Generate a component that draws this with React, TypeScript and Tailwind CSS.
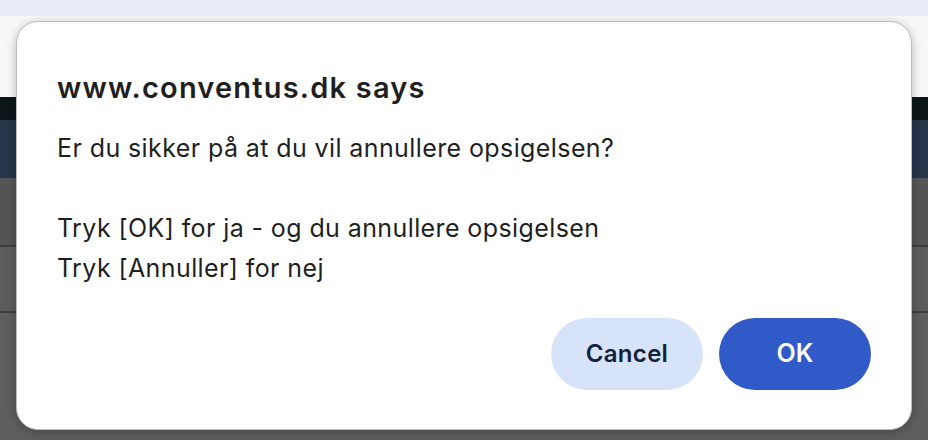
import React from "react";

export default function App() {
  return (
    <div
      className="relative w-[928px] h-[440px] overflow-hidden"
      style={{ fontFamily: "Inter, 'Noto Sans', sans-serif" }}
    >
      {/* page behind the dialog */}
      <div className="flex flex-col h-full">
        <div className="h-[16px] bg-[#e8edf7]" />
        <div className="h-[81px] bg-[#f7f7f7]" />
        <div className="h-[23px] bg-[#0e1718]" />
        <div className="h-[58px] bg-[#27354a]" />
        <div className="h-[69px] bg-[#555555] border-b-2 border-[#3e3e3e]" />
        <div className="h-[66px] bg-[#5c5c5c] border-b-2 border-[#3e3e3e]" />
        <div className="flex-1 bg-[#5e5e5e]" />
      </div>

      {/* alert dialog */}
      <div className="absolute left-[16px] top-[21px] w-[896px] h-[409px] bg-white rounded-[22px] border border-[#bdbdbd] shadow-[0_2px_10px_rgba(0,0,0,0.25)] flex flex-col px-[40px] pt-[46px] pb-[39px]">
        <h1 className="text-[29px] font-semibold leading-[40px] text-[#1f1f1f] tracking-[1.2px]">
          www.conventus.dk says
        </h1>
        <div className="mt-[20px] text-[25px] leading-[40px] text-[#1f1f1f] tracking-[0.4px]">
          <p>Er du sikker på at du vil annullere opsigelsen?</p>
          <p>&nbsp;</p>
          <p>Tryk [OK] for ja - og du annullere opsigelsen</p>
          <p>Tryk [Annuller] for nej</p>
        </div>
        <div className="mt-auto flex justify-end gap-[16px]">
          <button className="w-[152px] h-[72px] rounded-full bg-[#d7e3f9] text-[#14213d] text-[24px] font-semibold tracking-[0.3px]">
            Cancel
          </button>
          <button className="w-[152px] h-[72px] rounded-full bg-[#2f5ac8] text-white text-[25px] font-semibold">
            OK
          </button>
        </div>
      </div>
    </div>
  );
}
